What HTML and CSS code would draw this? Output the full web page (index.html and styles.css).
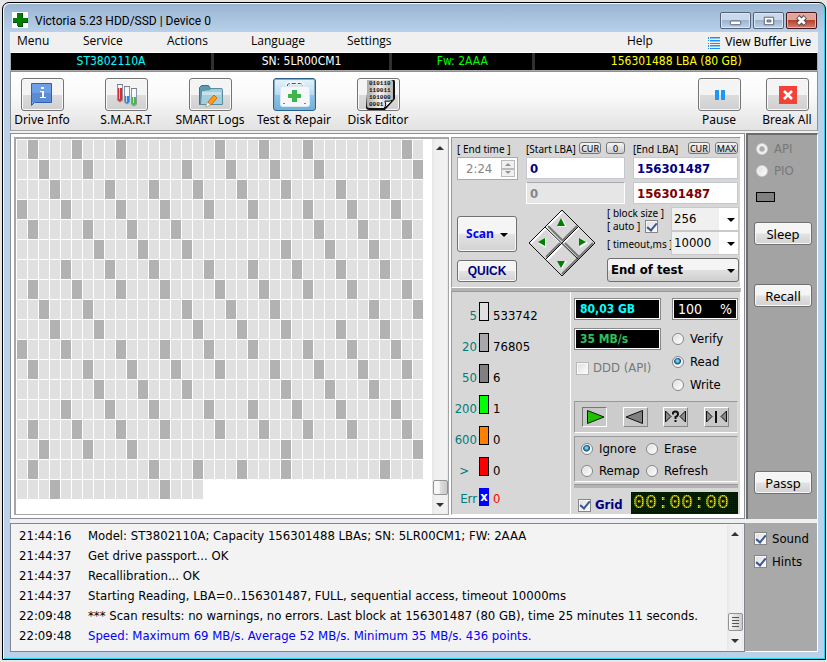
FILE: index.html
```html
<!DOCTYPE html>
<html lang="en">
<head>
<meta charset="utf-8">
<title>Victoria 5.23 HDD/SSD | Device 0</title>
<link rel="stylesheet" href="styles.css">
</head>
<body>
<div class="window">
  <header class="titlebar">
    <svg class="app-icon" viewBox="0 0 16 16"><path fill="#fff" d="M0 0h16v16H0z"/><path fill="#050" d="M6 1h5v5h5v5h-5v4H6v-4H1V6h5z"/><path fill="#008000" d="M5 1h5v5h5v4h-5v4H5v-4H1V6h4z"/></svg>
    <h1 class="title">Victoria 5.23 HDD/SSD | Device 0</h1>
    <div class="win-buttons">
      <button class="win-btn" aria-label="Minimize"><svg viewBox="0 0 30 16"><rect x="9.500" y="8.500" width="11" height="4" rx="1" fill="#fff" stroke="#555b6b"/></svg></button>
      <button class="win-btn" aria-label="Maximize"><svg viewBox="0 0 30 16"><path fill="#fff" stroke="#555b6b" fill-rule="evenodd" d="M10.500 4.500h10v8h-10zM13.500 7.500v2h4v-2z"/></svg></button>
      <button class="win-btn win-close" aria-label="Close"><svg viewBox="0 0 30 16"><path d="M11 4l8 8M19 4l-8 8" stroke="#55434b" stroke-width="5"/><path d="M11.500 4.500l7 7M18.500 4.500l-7 7" stroke="#fff" stroke-width="3"/></svg></button>
    </div>
  </header>
  <div class="client">
    <nav class="menu">
      <a href="#">Menu</a><a href="#">Service</a><a href="#">Actions</a><a href="#">Language</a><a href="#">Settings</a><a href="#">Help</a>
      <a href="#" class="view-live"><svg viewBox="0 0 12 12"><path fill="#1e90f0" d="M0 0h1v2H0zM0 3h1v1H0zM0 6h1v1H0zM0 8h1v2H0zM0 11h1v1H0zM2 0h10v1H2zM2 3h10v1H2zM2 6h10v1H2zM2 8h10v1H2zM2 11h10v1H2z"/><path fill="#8cc4f2" d="M2 1h10v1H2zM2 4h10v1H2zM2 9h10v1H2z"/></svg>View Buffer Live</a>
    </nav>
    <div class="strip">
      <span class="cyan">ST3802110A</span><span>SN: 5LR00CM1</span><span class="green">Fw: 2AAA</span><span class="yellow">156301488 LBA (80 GB)</span>
    </div>
    <div class="toolbar">
      <div class="tools">
        <button class="tool"><span class="tool-face"><svg viewBox="0 0 43 33"><path fill="#6f9fe6" stroke="#2d62ae" d="M10.500 5.500h20v19h-17l-3 3z"/><path fill="#4c7bc8" d="M11 15h19v9H11z" opacity=".55"/><path fill="#fff" d="M20 9h3v2h-3zM19 13h4v6h2v1h-6v-1h2v-5h-2z"/></svg></span>Drive Info</button>
        <button class="tool"><span class="tool-face"><svg viewBox="0 0 43 33"><path fill="#f4f7fa" stroke="#8b94a1" d="M12.500 6.500h5v16q-2.500 3-5 0zM19.500 8.500h5v16q-2.500 3-5 0zM26.500 10.500h5v16q-2.500 3-5 0z"/><path fill="#d22e36" d="M13 10h4v12q-2 3-4 0z"/><path fill="#3583d4" d="M20 18h4v6q-2 3-4 0z"/><path fill="#43b64c" d="M27 19h4v7q-2 3-4 0z"/><path stroke="#fff" opacity=".7" d="M14.500 8v13M21.500 10v14M28.500 12v13"/><path stroke="#75808d" d="M12 6.500h6M19 8.500h6M26 10.500h6"/></svg></span>S.M.A.R.T</button>
        <button class="tool"><span class="tool-face"><svg viewBox="0 0 43 33"><path fill="#5d9bb5" stroke="#36758f" d="M10.500 26.500v-17l2-2h7l2 3h11v16z"/><path fill="#a4cedb" stroke="#568ba0" d="M12.500 12.500l8-1 2-1h10q1 0 1 2v14h-22z"/><path fill="#c7e2e8" d="M13 14h19v3H13z"/><path fill="#ff9d16" stroke="#d06a00" d="M25 17l-6 7 3 3 6-7z"/><path fill="#fff" stroke="#b09070" stroke-width=".7" d="M18.500 24l-2 5 5-2z"/></svg></span>SMART Logs</button>
        <button class="tool tool-on"><span class="tool-face"><svg viewBox="0 0 43 33"><path fill="none" stroke="#eef4f8" stroke-width="3" d="M14 8V6l2-1h12l2 1v2"/><path fill="none" stroke="#4b5b66" d="M14.500 8V6.500l2-1h11l2 1V8" stroke-dasharray="4 2"/><rect x="7.500" y="8.500" width="29" height="20" rx="2" fill="#f6f7f8" stroke="#dce6ed"/><path fill="#3cb64a" d="M19 12h5v4h4v4h-4v4h-5v-4h-4v-4h4z"/><path fill="#7b8790" d="M10 25h2v1h-2zM31 25h2v1h-2z"/></svg></span>Test &amp; Repair</button>
        <button class="tool"><span class="tool-face"><svg viewBox="0 0 43 33"><defs><linearGradient id="page" x2="1"><stop stop-color="#aaa"/><stop offset=".5" stop-color="#f2f2f2"/><stop offset="1" stop-color="#b5b5b5"/></linearGradient></defs><path fill="#111" d="M11 2h26q1 0 1 2v17L28 32H12q-3 0-3-3z"/><path fill="url(#page)" d="M10 2h24q2 0 2 2v18l-9 8H12q-2 0-2-2z"/><path fill="#eee" stroke="#111" d="M36 22q-4 2-8 1 2 4-1 8z"/><g font-family="Liberation Mono,monospace" font-size="6" font-weight="bold" fill="#111"><text x="12" y="7">010110</text><text x="12" y="14">110011</text><text x="12" y="21">101000</text><text x="12" y="28">0001</text></g></svg></span>Disk Editor</button>
      </div>
      <div class="tools tools-end">
        <button class="tool"><span class="tool-face"><svg viewBox="0 0 43 33"><path fill="#2196f3" d="M17 12h4v10h-4zM23 12h4v10h-4z"/></svg></span>Pause</button>
        <button class="tool"><span class="tool-face"><svg viewBox="0 0 43 33"><path fill="#f44336" d="M13 8h18v18H13z"/><path stroke="#fff" stroke-width="2.500" d="M18 13l8 8M26 13l-8 8"/></svg></span>Break All</button>
      </div>
    </div>

    <div class="middle">
      <main class="workspace">
        <section class="map" aria-label="Surface map">
          <div class="blocks" id="blocks"></div>
          <div class="scroll"><i class="up"></i><b class="thumb"></b><i class="down"></i></div>
        </section>
        <div class="controls">
          <section class="panel setup">
            <div class="fields">
              <div class="field">
                <div class="caption"><label for="endtime">[ End time ]</label></div>
                <div class="spin"><input id="endtime" value="2:24" disabled><span class="arrows"><button disabled aria-label="Later"><i class="mini up"></i></button><button disabled aria-label="Earlier"><i class="mini down"></i></button></span></div>
              </div>
              <div class="field">
                <div class="caption"><label for="start">[Start LBA]</label><span class="caps"><button>CUR</button><button>0</button></span></div>
                <input class="lba" id="start" value="0">
                <input class="lba" aria-label="Current start" value="0" disabled>
              </div>
              <div class="field">
                <div class="caption"><label for="end">[End LBA]</label><span class="caps"><button>CUR</button><button>MAX</button></span></div>
                <input class="lba" id="end" value="156301487">
                <input class="lba maroon" aria-label="Current end" value="156301487">
              </div>
            </div>
            <div class="actions">
              <div class="launch">
                <button class="btn scan">Scan <i class="caret"></i></button>
                <button class="btn quick">QUICK</button>
              </div>
              <svg class="pad" viewBox="0 0 68 68" role="img" aria-label="Direction pad">
                <path fill="#d8d8d8" d="M34 1l33 33-33 33L1 34z"/>
                <g fill="none"><path stroke="#fff" stroke-width="2" d="M3 34L34 3M19 51l15-15M36 33l15-15M19 20l15 15"/><path stroke="#777" stroke-width="2" d="M34 65l31-31M18 48l14-14M34 32l15-15M20 17l14 14M37 34l14 14"/><path stroke="#111" stroke-width="1" d="M34 1l33 33-33 33L1 34zM17 18l34 33M51 17L17 51"/></g>
                <path fill="#fff" d="M34 9l5 9h-9zM10 34l8-5v10zM60 34l-8-5v10zM34 60l5-8h-9z"/><path fill="#008000" d="M33 9l4 8h-8zM10 33l7-4v8zM58 33l-7-4v8zM33 59l4-7h-8z"/>
              </svg>
              <div class="options">
                <div class="opt-grid">
                  <div class="opt-labels">
                    <label for="bsize">[ block size ]</label>
                    <span class="auto"><label for="auto">[ auto ]</label><input type="checkbox" id="auto" checked></span>
                    <label for="tmo">[ timeout,ms ]</label>
                  </div>
                  <div class="opt-selects">
                    <span class="drop"><select id="bsize"><option>256</option></select></span>
                    <span class="drop"><select id="tmo"><option>10000</option></select></span>
                  </div>
                </div>
                <span class="drop drop-end"><select aria-label="When finished"><option>End of test</option></select></span>
              </div>
            </div>
          </section>
          <section class="panel results">
            <ul class="stats">
              <li><span>5</span><i class="s1"></i><b>533742</b></li>
              <li><span>20</span><i class="s2"></i><b>76805</b></li>
              <li><span>50</span><i class="s3"></i><b>6</b></li>
              <li><span>200</span><i class="s4"></i><b>1</b></li>
              <li><span>600</span><i class="s5"></i><b>0</b></li>
              <li><span class="over">&gt;</span><i class="s6"></i><b>0</b></li>
              <li class="err"><span>Err</span><i class="s7">x</i><b>0</b></li>
            </ul>
            <div class="monitor">
              <div class="readouts">
                <div class="read-col">
                  <output class="lcd cyan">80,03 GB</output>
                  <output class="lcd speed">35 MB/s</output>
                  <label class="check muted"><input type="checkbox" disabled>DDD (API)</label>
                </div>
                <div class="mode-col">
                  <output class="lcd percent"><span>100</span><span>%</span></output>
                  <div class="modes">
                    <label class="check"><input type="radio" name="mode">Verify</label>
                    <label class="check"><input type="radio" name="mode" checked>Read</label>
                    <label class="check"><input type="radio" name="mode">Write</label>
                  </div>
                </div>
              </div>
              <div class="inset seek">
                <button class="key pressed" aria-label="Forward"><svg viewBox="0 0 25 20"><path fill="#22c000" stroke="#052005" d="M5.500 3.500v13L22 10z"/></svg></button>
                <button class="key" aria-label="Backward"><svg viewBox="0 0 25 20"><path fill="#808080" stroke="#111" d="M19.500 3.500v13L3 10z"/></svg></button>
                <button class="key" aria-label="Random"><svg viewBox="0 0 25 20"><path fill="#888" stroke="#111" d="M2.500 4v11L8 9.500zM22.500 4v11L17 9.500z"/><path fill="none" stroke="#111" stroke-width="2" d="M9 6.500h1q0-2 2.500-2T15 7q0 2-2.500 3v2M12.500 13v2"/></svg></button>
                <button class="key" aria-label="Butterfly"><svg viewBox="0 0 25 20"><path fill="#888" stroke="#111" d="M2.500 4v11L8 9.500zM22.500 4v11L17 9.500z"/><path fill="#111" d="M11 4h2v12h-2z"/></svg></button>
              </div>
              <div class="inset faults">
                <label class="check"><input type="radio" name="fault" checked>Ignore</label>
                <label class="check"><input type="radio" name="fault">Erase</label>
                <label class="check"><input type="radio" name="fault">Remap</label>
                <label class="check"><input type="radio" name="fault">Refresh</label>
              </div>
              <div class="rule"></div>
              <div class="grid-row">
                <label class="check grid-check"><input type="checkbox" checked>Grid</label>
                <output class="clock">00:00:00</output>
              </div>
            </div>
          </section>
        </div>
      </main>
      <aside class="side">
        <label class="check muted"><input type="radio" name="api" checked disabled>API</label>
        <label class="check muted"><input type="radio" name="api" disabled>PIO</label>
        <i class="lamp"></i>
        <button class="btn sleep">Sleep</button>
        <button class="btn recall">Recall</button>
        <button class="btn passp">Passp</button>
      </aside>
    </div>

    <div class="bottom">
      <section class="log">
        <table>
          <tr><td>21:44:16</td><td>Model: ST3802110A; Capacity 156301488 LBAs; SN: 5LR00CM1; FW: 2AAA</td></tr>
          <tr><td>21:44:37</td><td>Get drive passport... OK</td></tr>
          <tr><td>21:44:37</td><td>Recallibration... OK</td></tr>
          <tr><td>21:44:37</td><td>Starting Reading, LBA=0..156301487, FULL, sequential access, timeout 10000ms</td></tr>
          <tr><td>22:09:48</td><td>*** Scan results: no warnings, no errors. Last block at 156301487 (80 GB), time 25 minutes 11 seconds.</td></tr>
          <tr><td>22:09:48</td><td class="blue">Speed: Maximum 69 MB/s. Average 52 MB/s. Minimum 35 MB/s. 436 points.</td></tr>
        </table>
        <div class="scroll"><i class="up"></i><b class="thumb grip"></b><i class="down"></i></div>
      </section>
      <aside class="prefs">
        <label class="check"><input type="checkbox" checked>Sound</label>
        <label class="check"><input type="checkbox" checked>Hints</label>
      </aside>
    </div>
  </div>
</div>
<script src="script.js"></script>
</body>
</html>
```
FILE: styles.css
```css
* { box-sizing: border-box; }
body {
  margin: 0;
  padding: 2px 1px 3px 2px;
  background: #e6e6e6;
  color: #000;
  font: 13px/20px "DejaVu Sans Condensed", "Noto Sans", sans-serif;
}
button, input, select { font: inherit; color: inherit; margin: 0; padding: 0; border-radius: 0; }
a { color: inherit; text-decoration: none; }
svg { display: block; }
.tool, .btn, .caption, .opt-labels { font-family: "Noto Sans", sans-serif; }
.menu { font-family: "Open Sans", sans-serif; }
.title, .menu .view-live { font-family: Roboto, sans-serif; }
.cyan { color: #0ff; }
.green { color: #0f0; }
.yellow { color: #ff0; }
.blue { color: #00f; }

.window {
  display: flex;
  flex-direction: column;
  min-height: calc(100vh - 5px);
  padding: 0 7px 7px;
  border: 1px solid #000;
  border-radius: 7px 7px 0 0;
  background: linear-gradient(#99b4d1, #b9d1ea 30px);
  box-shadow: inset 1px 1px #f2f7fc, inset -1px -1px #28d4ee;
}
.titlebar { display: flex; align-items: flex-start; height: 29px; padding-left: 2px; }
.app-icon { width: 16px; height: 16px; margin-top: 9px; }
.title { flex: 1; margin: 8px 0 0 7px; font-size: 12px; line-height: 20px; font-weight: 400; }
.win-buttons { display: flex; gap: 2px; margin: 9px 1px 0; }
.win-btn {
  width: 31px; height: 17px;
  border: 1px solid #536278; border-radius: 2px;
  background: linear-gradient(#c9d9e9 45%, #9db5cf 50%, #bdd3e9);
  box-shadow: inset 0 0 0 1px #dbe8f4;
}
.win-btn svg { width: 29px; height: 15px; }
.win-close { border-color: #43141c; background: linear-gradient(#e2a497 45%, #b8412e 50%, #d28370); box-shadow: inset 0 0 0 1px #e5b4a8; }

.client { flex: 1; display: flex; flex-direction: column; background: #f0f0f0; }
.menu { display: grid; grid-template-columns: 66px 84px 84px 96px 1fr 81px auto; height: 20px; padding: 0 7px; font-size: 12px; line-height: 18px; }
.menu a { white-space: nowrap; }
.menu .view-live { display: flex; gap: 5px; line-height: 20px; }
.view-live svg { width: 12px; height: 12px; margin-top: 5px; }
.strip {
  display: grid; grid-template-columns: 201fr 176fr 141fr 283fr; gap: 3px;
  border: 1px solid #aaa; border-top-color: #fff; background: #303030; color: #fff;
  font-size: 12px; line-height: 17px; text-align: center;
}
.strip span { background: #000; }

.toolbar {
  display: flex; justify-content: space-between; height: 60px;
  border: 1px solid #909090; border-bottom-color: #a5a5a5;
  background: linear-gradient(#fff, #fafafa 40%, #e2e2e2);
}
.tools { display: flex; gap: 22px; padding-top: 6px; }
.tools-end { gap: 20px; padding-right: 6px; }
.tool {
  display: flex; flex-direction: column; align-items: center; width: 62px;
  border: 0; background: none; font-size: 12px; line-height: 17px; white-space: nowrap;
}
.tools-end .tool { width: 48px; }
.tool-face {
  width: 43px; height: 33px; border: 1px solid #747474; border-radius: 3px;
  background: linear-gradient(#f4f4f4 50%, #dcdcdc 52%, #cfcfcf); box-shadow: inset 0 0 0 1px #fafafa;
}
.tool-face svg { width: 43px; height: 33px; margin: -1px; }
.tool-on .tool-face { border-color: #2c628b; background: linear-gradient(#e5f4fc, #b5dcf2 50%, #8cc6e8 52%, #68b3db); box-shadow: inset 0 0 0 1px #82aecb; }

.middle { flex: 1; display: flex; gap: 1px; margin-top: 2px; }
.workspace { flex: 1; display: flex; gap: 2px; padding: 3px; border: 1px solid #8a8c96; background: #fff; }
.map { flex: 1; display: flex; justify-content: space-between; border: 2px solid #a5a5aa; border-right-width: 1px; border-bottom-width: 1px; background: #fff; }
.blocks { display: grid; grid-template-columns: repeat(37, 10px); grid-auto-rows: 19px; gap: 1px; align-content: start; padding: 1px; }
.blocks i { background: #e0e0e0; }
.blocks .slow { background: #b2b2b2; }
.scroll { display: flex; flex-direction: column; align-items: center; width: 16px; padding: 7px 0; background: linear-gradient(90deg, #e6e6e6, #efefef 3px, #f2f2f2 90%, #e4e4e4); }
.up, .down { border: 4px solid transparent; }
.up { border-top: 0; border-bottom-color: #333; }
.down { border-bottom: 0; border-top-color: #333; }
.thumb { width: 15px; height: 15px; margin: auto 0 8px; border: 1px solid #929292; border-radius: 2px; background: linear-gradient(90deg, #f7f7f7 40%, #ddd 50%, #cacaca); }

.controls { display: flex; flex-direction: column; width: 290px; background: #b3b3b3; }
.panel { border: 1px solid #999; border-right-color: #fff; border-bottom-color: #fff; background: #d7d7d7; }
.setup { height: 151px; padding: 4px 1px 0 5px; margin-bottom: 3px; }
.fields { display: grid; grid-template-columns: 61px 99px 105px; gap: 8px; }
.caption { display: flex; justify-content: space-between; height: 15px; font-size: 10px; line-height: 14px; white-space: nowrap; }
.caps { display: flex; gap: 5px; }
.caps button { min-width: 19px; height: 12px; padding: 0 1px; border: 1px solid #777; border-radius: 3px; background: linear-gradient(#f5f5f5, #ccc); font-size: 9px; line-height: 9px; }
.lba { display: block; width: 100%; height: 22px; margin-bottom: 3px; padding: 0 3px; border: 1px solid #c5c9cf; background: #fff; color: #00007f; font-weight: 700; }
.lba:disabled { color: #858585; background: #e6e6e6; border-color: #fff; border-top-color: #aaa; }
.maroon { color: #800000; }
.spin { display: flex; height: 23px; border: 1px solid #aaa; background: #fff; padding: 2px; }
.spin input { flex: 1; min-width: 0; border: 0; padding-left: 6px; background: none; color: #858585; }
.arrows { display: grid; width: 14px; }
.arrows button { display: grid; place-items: center; border: 1px solid #bbb; background: #f0f0f0; }
.mini { border-width: 3px; opacity: .5; }
.mini.up { border-top-width: 0; }
.mini.down { border-bottom-width: 0; }
.actions { display: grid; grid-template-columns: 60px 68px 132px; justify-content: space-between; }
.launch { display: flex; flex-direction: column; gap: 8px; padding-top: 9px; }
.btn { border: 1px solid #707070; border-radius: 3px; background: linear-gradient(#f5f5f5 48%, #e2e2e2 52%, #d2d2d2); box-shadow: inset 0 0 0 1px #f8f8f8; font-size: 13px; line-height: 20px; }
.scan { height: 36px; color: #00f; font-size: 12px; font-weight: 700; }
.quick { height: 22px; color: #00007f; font-family: "Liberation Sans", sans-serif; font-size: 12px; font-weight: 700; }
.caret { display: inline-block; margin-left: 3px; border: 4px solid transparent; border-top-color: #000; border-bottom: 0; vertical-align: middle; }
.pad { width: 68px; height: 68px; margin-top: 2px; }
.opt-grid { display: grid; grid-template-columns: 64px 68px; height: 51px; }
.opt-labels { display: flex; flex-direction: column; font-size: 10px; line-height: 13px; white-space: nowrap; }
.opt-labels > label:last-child { margin-top: 5px; }
.auto { display: flex; gap: 5px; }
.opt-selects { display: grid; grid-template-rows: 24px 24px; }
.drop { position: relative; display: block; }
.drop::after { content: ""; position: absolute; right: 4px; top: 11px; border: 4px solid transparent; border-top-color: #000; border-bottom: 0; pointer-events: none; }
.drop select { width: 100%; height: 24px; padding-left: 2px; appearance: none; border: 1px solid #c9c9c9; background: linear-gradient(90deg, #f0f0f0 47px, #fff 47px); }
.drop-end select { padding-left: 3px; border: 1px solid #707070; border-radius: 3px; background: linear-gradient(#f5f5f5 48%, #e0e0e0 52%, #d0d0d0); font-weight: 700; }

.results { flex: 1; display: grid; grid-template-columns: 119px 1fr; }
.stats { margin: 0; padding: 10px 0 0 2px; list-style: none; border-right: 1px solid #fff; }
.stats li { display: grid; grid-template-columns: 23px 10px 1fr; column-gap: 2px; height: 31px; }
.stats span { color: #007b7b; text-align: right; padding-top: 4px; }
.stats .over { padding-right: 8px; }
.stats i { height: 19px; border: 1px solid #000; font: 700 13px/17px "DejaVu Sans Condensed", sans-serif; text-align: center; color: #fff; }
.stats b { padding: 4px 0 0 2px; font-weight: 400; }
.s1 { background: #e0e0e0; } .s2 { background: #a8a8ac; } .s3 { background: #808080; }
.s4 { background: #0f0; } .s5 { background: #ff8000; } .s6 { background: #f00; }
.stats .s7 { background: #00f; border: 0; height: 18px; }
.stats .err { height: 22px; }
.stats .err span, .stats .err b { padding-top: 1px; }
.stats .err b { color: #f00; }
.monitor { padding: 6px 2px 0 3px; min-width: 0; }
.readouts { display: flex; justify-content: space-between; height: 103px; }
.read-col { display: flex; flex-direction: column; gap: 8px; width: 87px; white-space: nowrap; }
.mode-col { width: 66px; }
.lcd { display: block; height: 22px; padding: 0 5px; border: 1px solid #888; box-shadow: inset 0 0 0 1px #fff; background: #000; font-size: 12px; line-height: 20px; font-weight: 700; }
.speed { color: #2fbf5b; }
.percent { display: flex; justify-content: space-between; color: #fff; font-size: 14px; font-weight: 400; }
.modes { display: grid; gap: 3px; padding-top: 9px; }
.check { display: flex; align-items: center; gap: 6px; line-height: 20px; }
.read-col .check { padding-left: 2px; gap: 4px; }
.muted { color: #777; }
input[type="checkbox"], input[type="radio"] { appearance: none; flex: none; width: 13px; height: 13px; border: 1px solid #868686; background: linear-gradient(135deg, #ddd, #fff); box-shadow: inset 0 0 0 1px #f8f8f8; }
input[type="radio"] { width: 12px; height: 12px; border-radius: 50%; }
input[type="checkbox"]:checked { display: grid; place-items: center; }
input[type="checkbox"]:checked::before { content: ""; width: 4px; height: 8px; margin-top: -2px; border: solid #3a5795; border-width: 0 2px 2px 0; transform: rotate(40deg); }
input[type="radio"]:checked { background: radial-gradient(circle at 45% 40%, #6cd0f4 0 1px, #124978 3px, #f4f4f4 4px); }
input[type]:disabled { border-color: #b8b8b8; }
.side input[type="radio"]:disabled { border-color: #ccc; }
.side input[type="radio"]:disabled:checked { background: radial-gradient(#aaa 0 2px, #ddd 3px, #f1f1f1 4px); }
.spin input[id]:disabled { border: 0; }
.inset { border: 1px solid #999; border-bottom-color: #fff; border-right-color: #ddd; background: #ccc; }
.seek { display: flex; justify-content: space-between; height: 32px; padding: 5px 8px 0 7px; }
.key { width: 25px; height: 20px; border: 1px solid #fff; border-right-color: #888; border-bottom-color: #888; background: #c8c8c8; }
.key svg { width: 25px; height: 20px; margin: -1px; }
.pressed { border-color: #777 #fff #fff #777; }
.faults { display: grid; grid-template-columns: 65px 1fr; row-gap: 2px; height: 46px; margin-top: 3px; padding: 2px 0 0 6px; }
.rule { height: 4px; margin-top: 2px; background: #b3b3b3; border-top: 1px solid #999; }
.grid-row { display: flex; justify-content: space-between; height: 22px; margin-top: 4px; padding: 0 0 0 4px; }
.grid-check { gap: 4px; padding-top: 4px; line-height: 18px; color: #00007f; font-weight: 700; }
.clock { position: relative; width: 107px; height: 22px; padding-left: 2px; background: #002c00; color: #ff0; font: 20px/22px "Liberation Mono", monospace; overflow: hidden; }
.clock::after { content: ""; position: absolute; inset: 0; background: repeating-linear-gradient(#000 0 1px, transparent 1px 2px), repeating-linear-gradient(90deg, #000 0 1px, transparent 1px 2px); opacity: .4; }

.side { display: flex; flex-direction: column; width: 72px; padding: 3px 6px 0 8px; border: solid #6c6c6c; border-width: 2px 0 0 2px; border-right: 1px solid #fff; background: #a3a3a3; }
.side .check { height: 22px; gap: 6px; }
.lamp { width: 19px; height: 10px; margin-top: 10px; border: 1px solid #000; background: #808080; }
.side .btn { height: 23px; margin: 0 -1px 0 -2px; }
.side .sleep { margin-top: 20px; }
.side .recall { margin-top: 39px; }
.side .passp { margin-top: auto; margin-bottom: 25px; }

.bottom { display: flex; height: 129px; margin-top: 4px; background: #a9a9a9; }
.log { flex: 1; display: flex; justify-content: space-between; padding: 1px; border: 1px solid #83848e; background: #f3f3f3; }
.log table { border-collapse: collapse; margin: 1px 0 auto 7px; white-space: nowrap; }
.log td { height: 20px; padding: 0; }
.log td:first-child { width: 69px; }
.log .thumb { height: 18px; }
.grip { background: repeating-linear-gradient(#555 0 1px, transparent 1px 3px) center / 7px 10px no-repeat, linear-gradient(90deg, #f7f7f7, #ccc); }
.prefs { width: 73px; padding: 4px 0 0 9px; border: solid #fff; border-width: 0 1px 1px 0; }
.prefs .check { height: 23px; gap: 5px; }
```
FILE: script.js
```js
// Column numbers of the slower blocks, one list for each row of the map.
const slow = [
  [1, 5, 9, 18, 22, 26, 35], [2, 6, 15, 19, 23, 27, 36], [3, 8, 12, 16, 20, 24, 29, 33],
  [0, 4, 9, 13, 17, 21, 26, 30, 34], [1, 6, 10, 14, 27, 31, 35], [7, 11, 15, 24, 28, 32],
  [4, 8, 12, 17, 21, 25, 29, 33], [1, 5, 9, 13, 18, 22, 26, 30, 35], [2, 6, 15, 19, 23, 32, 36],
  [3, 7, 16, 20, 24, 29, 33], [0, 4, 9, 13, 17, 21, 26, 30, 34], [1, 6, 10, 14, 18, 23, 27, 31, 35],
  [7, 11, 15, 24, 28, 32], [4, 8, 12, 17, 21, 25, 29, 34], [1, 5, 9, 13, 18, 22, 26, 30, 35],
  [2, 6, 10, 24, 36], [1, 12, 16, 20, 24, 33], [3, 13]
];
const COLUMNS = 37, LAST_ROW = 17;
const map = document.getElementById("blocks");
slow.forEach((marks, row) => {
  const count = row === slow.length - 1 ? LAST_ROW : COLUMNS;
  for (let col = 0; col < count; col++) {
    const cell = document.createElement("i");
    if (marks.includes(col)) cell.className = "slow";
    map.append(cell);
  }
});
```
